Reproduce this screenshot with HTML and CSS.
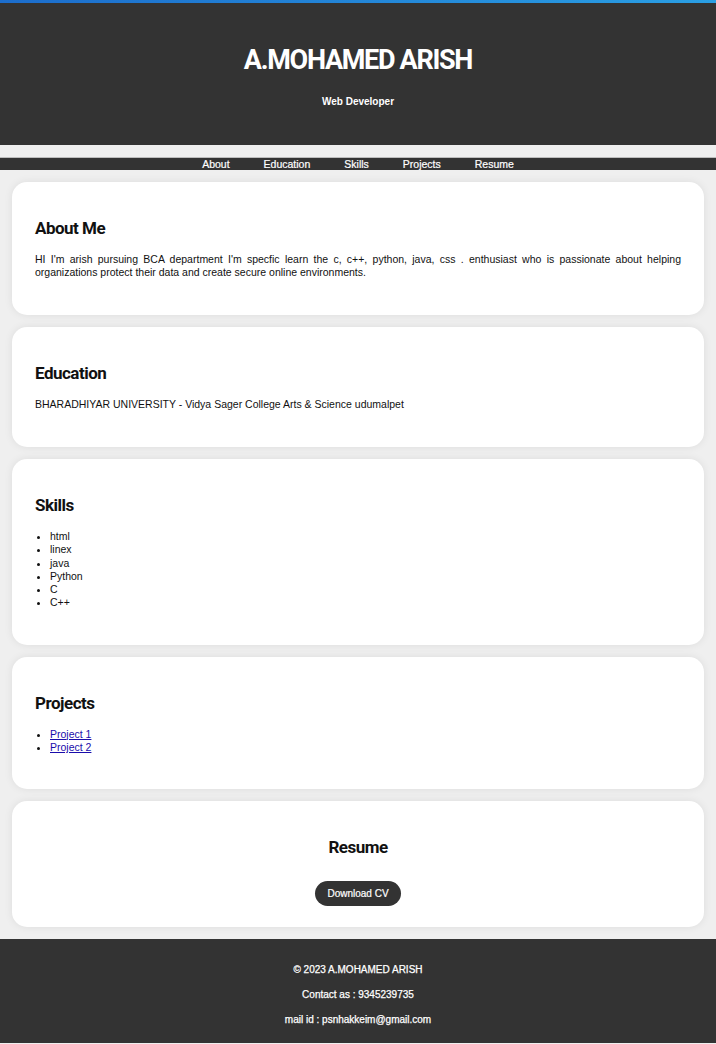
FILE: index.html
```html
<!DOCTYPE html>
<html lang="en">
<head>
<meta charset="utf-8">
<title>A.MOHAMED ARISH</title>
<link rel="stylesheet" href="styles.css">
</head>
<body>
<div class="topline"></div>
<header class="hero">
  <h1>A.MOHAMED ARISH</h1>
  <p>Web Developer</p>
</header>
<nav class="nav">
  <a href="#about">About</a>
  <a href="#education">Education</a>
  <a href="#skills">Skills</a>
  <a href="#projects">Projects</a>
  <a href="#resume">Resume</a>
</nav>
<main class="content">
  <section class="card" id="about">
    <h2>About Me</h2>
    <p class="text">HI I'm arish pursuing BCA department I'm specfic learn the c, c++, python, java, css . enthusiast who is passionate about helping organizations protect their data and create secure online environments.</p>
  </section>
  <section class="card" id="education">
    <h2>Education</h2>
    <p class="text">BHARADHIYAR UNIVERSITY - Vidya Sager College Arts &amp; Science udumalpet</p>
  </section>
  <section class="card" id="skills">
    <h2>Skills</h2>
    <ul class="list">
      <li>html</li>
      <li>linex</li>
      <li>java</li>
      <li>Python</li>
      <li>C</li>
      <li>C++</li>
    </ul>
  </section>
  <section class="card" id="projects">
    <h2>Projects</h2>
    <ul class="list">
      <li><a href="#">Project 1</a></li>
      <li><a href="#">Project 2</a></li>
    </ul>
  </section>
  <section class="card card-center" id="resume">
    <h2>Resume</h2>
    <div class="btn-row"><a class="btn" href="#">Download CV</a></div>
  </section>
</main>
<footer class="footer">
  <p>© 2023 A.MOHAMED ARISH</p>
  <p>Contact as : 9345239735</p>
  <p>mail id : psnhakkeim@gmail.com</p>
</footer>
</body>
</html>
```
FILE: styles.css
```css
* { box-sizing: border-box; }
html, body { margin: 0; padding: 0; }
body {
  background: #efefef;
  font-family: "Liberation Sans", Arial, sans-serif;
  color: #111;
}
.topline {
  height: 3px;
  background: linear-gradient(90deg, #1c6dcc, #2a9fe4);
}
.hero {
  background: #333333;
  color: #fff;
  text-align: center;
  padding: 42px 0 36px;
}
.hero h1 {
  margin: 0;
  font-family: Roboto, "Liberation Sans", Arial, sans-serif;
  font-size: 27px;
  line-height: 30px;
  font-weight: bold;
  letter-spacing: -1.3px;
}
.hero p {
  margin: 20px 0 0;
  font-size: 10px;
  line-height: 14px;
  font-weight: bold;
}
.nav {
  margin-top: 12px;
  background: #333333;
  height: 13px;
  display: flex;
  justify-content: center;
  gap: 34px;
  border-top: 1px solid #bdbdbd;
}
.nav a {
  color: #fff;
  text-decoration: none;
  font-size: 10.5px;
  line-height: 12px;
  -webkit-text-stroke: 0.2px #fff;
}
.content {
  padding: 12px 12px 0;
  display: flex;
  flex-direction: column;
  gap: 12px;
}
.card {
  background: #fff;
  border-radius: 15px;
  padding: 21px 23px;
  box-shadow: 0 0 8px rgba(0, 0, 0, 0.08);
}
.card h2 {
  margin: 15px 0 15px;
  font-family: Roboto, "Liberation Sans", Arial, sans-serif;
  font-size: 17px;
  line-height: 20px;
  font-weight: bold;
  letter-spacing: -0.5px;
}
.text {
  margin: 0 0 15px;
  font-size: 10.5px;
  line-height: 13px;
  text-align: justify;
}
.list {
  margin: 0 0 14px;
  padding-left: 15px;
  font-size: 10.5px;
  line-height: 13.3px;
}
.list a { color: #1a0dab; }
.card-center { text-align: center; }
.btn-row { margin: 24px 0 0; line-height: 0; }
.btn {
  display: inline-block;
  background: #333333;
  color: #fff;
  text-decoration: none;
  font-size: 10px;
  line-height: 25px;
  height: 25px;
  padding: 0 12px;
  border-radius: 13px;
  -webkit-text-stroke: 0.2px #fff;
}
.footer {
  margin-top: 12px;
  background: #333333;
  color: #fff;
  text-align: center;
  padding: 24px 0 17px;
  display: flex;
  flex-direction: column;
  gap: 12px;
}
.footer p {
  margin: 0;
  font-size: 10px;
  line-height: 13px;
  -webkit-text-stroke: 0.25px #fff;
}
```
